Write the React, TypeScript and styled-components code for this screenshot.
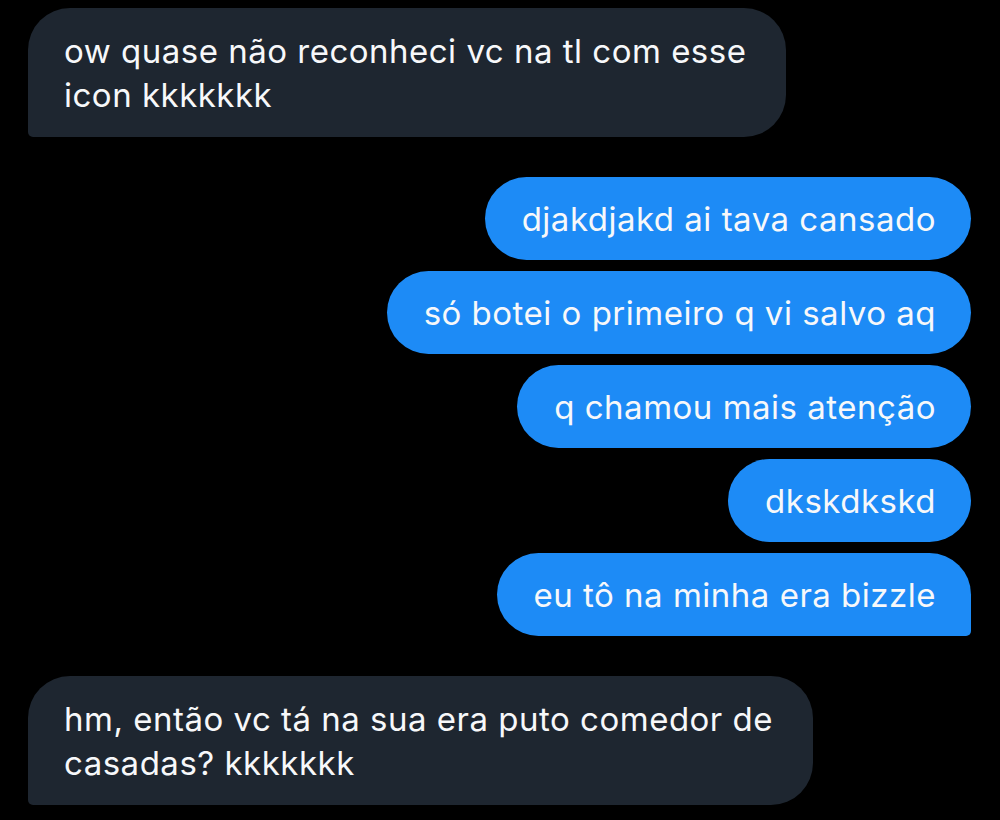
import styled, { createGlobalStyle } from 'styled-components'

const GlobalStyle = createGlobalStyle`
  html, body {
    margin: 0;
    padding: 0;
    background: #000;
  }
  body {
    font-family: Inter, "Liberation Sans", sans-serif;
    -webkit-font-smoothing: antialiased;
  }
`

interface MessageType {
  id: number
  mine: boolean
  lines: string[]
  last?: boolean
}

const messages: MessageType[] = [
  { id: 1, mine: false, lines: ['ow quase não reconheci vc na tl com esse', 'icon kkkkkkk'], last: true },
  { id: 2, mine: true, lines: ['djakdjakd ai tava cansado'] },
  { id: 3, mine: true, lines: ['só botei o primeiro q vi salvo aq'] },
  { id: 4, mine: true, lines: ['q chamou mais atenção'] },
  { id: 5, mine: true, lines: ['dkskdkskd'] },
  { id: 6, mine: true, lines: ['eu tô na minha era bizzle'], last: true },
  { id: 7, mine: false, lines: ['hm, então vc tá na sua era puto comedor de', 'casadas? kkkkkkk'], last: true },
]

function App() {
  // group consecutive messages from the same side
  const groups: MessageType[][] = []
  messages.forEach(m => {
    const g = groups[groups.length - 1]
    if (g && g[0].mine === m.mine) g.push(m)
    else groups.push([m])
  })

  return (
    <>
      <GlobalStyle />
      <Thread>
        {groups.map((g, i) => (
          <Group key={i} mine={g[0].mine}>
            {g.map(m => (
              <Bubble key={m.id} mine={m.mine} last={!!m.last}>
                {m.lines.map((l, j) => (
                  <Line key={j}>{l}</Line>
                ))}
              </Bubble>
            ))}
          </Group>
        ))}
      </Thread>
    </>
  )
}

const Thread = styled.div`
  width: 1000px;
  height: 820px;
  box-sizing: border-box;
  padding: 8px 29px 0 28px;
  display: flex;
  flex-direction: column;
  gap: 40px;
  overflow: hidden;
`

const Group = styled.div<{ mine: boolean }>`
  display: flex;
  flex-direction: column;
  gap: 11px;
  align-items: ${({ mine }) => (mine ? 'flex-end' : 'flex-start')};
`

const Bubble = styled.div<{ mine: boolean; last: boolean }>`
  box-sizing: border-box;
  padding: ${({ mine }) => (mine ? '20px 35px 19px 37px' : '21px 40px 20px 36px')};
  color: #f7f8fa;
  font-size: 33px;
  letter-spacing: 0.5px;
  line-height: 44px;
  background-color: ${({ mine }) => (mine ? '#1d8bf6' : '#1e2630')};
  border-radius: ${({ mine, last }) =>
    !last ? '42px' : mine ? '42px 42px 5px 42px' : '42px 42px 42px 5px'};
`

const Line = styled.div`
  white-space: nowrap;
`

export default App
